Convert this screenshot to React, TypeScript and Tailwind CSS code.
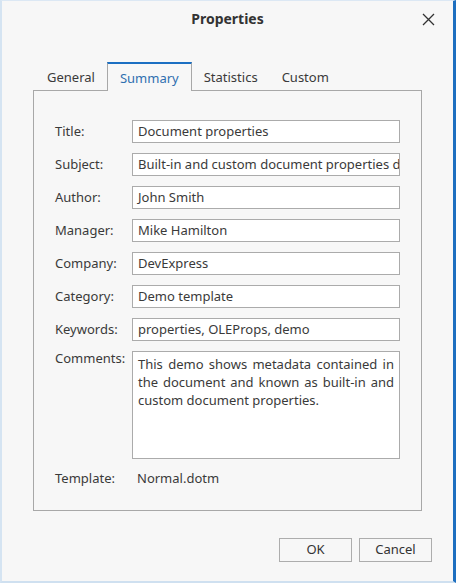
import React from 'react';

const fields: { label: string; value: string }[] = [
  { label: 'Title:', value: 'Document properties' },
  { label: 'Subject:', value: 'Built-in and custom document properties demo' },
  { label: 'Author:', value: 'John Smith' },
  { label: 'Manager:', value: 'Mike Hamilton' },
  { label: 'Company:', value: 'DevExpress' },
  { label: 'Category:', value: 'Demo template' },
  { label: 'Keywords:', value: 'properties, OLEProps, demo' },
];

const tabs = ['General', 'Summary', 'Statistics', 'Custom'];

export default function App() {
  return (
    <div
      className="w-[456px] h-[583px] bg-[#f7f7f7] border-l-2 border-t border-r-[3px] border-b-2 border-l-[#d5e4f2] border-t-[#dce8f4] border-r-[#1d6fc0] border-b-[#cfe0f0] flex flex-col text-[13px] text-[#3a3a3a]"
      style={{ fontFamily: '"Segoe UI", "Noto Sans", "Open Sans", sans-serif' }}
    >
      {/* title bar */}
      <div className="relative h-[35px] flex items-center justify-center">
        <span className="font-bold text-[14px] text-[#333]">Properties</span>
        <svg className="absolute right-[18px] top-[12px]" width="13" height="13" viewBox="0 0 13 13">
          <path d="M1 1 L12 12 M12 1 L1 12" stroke="#333" strokeWidth="1.3" fill="none" />
        </svg>
      </div>

      {/* tabs */}
      <div className="mt-[26px] px-[31px] flex flex-col">
        <div className="flex items-end h-[28px] relative z-10 pl-[2px]">
          {tabs.map((t) =>
            t === 'Summary' ? (
              <div
                key={t}
                className="h-[29px] -mb-px px-[12px] border-x border-[#a8a8a8] border-t-2 border-t-[#1b6fc2] bg-[#f7f7f7] text-[#2f6fb0] flex items-center pt-[2px]"
              >
                {t}
              </div>
            ) : (
              <div key={t} className="h-[28px] px-[12px] flex items-center pt-[4px] text-[#3a3a3a]">
                {t}
              </div>
            )
          )}
        </div>

        <div className="h-[421px] border border-[#a8a8a8] pt-[29px] pl-[21px] pr-[21px] flex flex-col">
          <div className="flex flex-col gap-[10px]">
            {fields.map((f) => (
              <div key={f.label} className="flex items-center">
                <div className="w-[77px] shrink-0">{f.label}</div>
                <div className="flex-1 h-[23px] bg-white border border-[#ababab] px-[5px] flex items-center overflow-hidden whitespace-nowrap">
                  {f.value}
                </div>
              </div>
            ))}
            <div className="flex items-start">
              <div className="w-[77px] shrink-0 -mt-[2px]">Comments:</div>
              <div className="flex-1 h-[108px] bg-white border border-[#ababab] pl-[5px] pr-[5px] pt-[3px] leading-[18px] text-justify">
                This demo shows metadata contained in the document and known as built-in and custom document properties.
              </div>
            </div>
          </div>
          <div className="flex items-center mt-[10px] h-[20px]">
            <div className="w-[82px] shrink-0">Template:</div>
            <div>Normal.dotm</div>
          </div>
        </div>
      </div>

      {/* buttons */}
      <div className="flex justify-end gap-[7px] pr-[21px] mt-[27px]">
        <button className="w-[73px] h-[24px] border border-[#adadad] bg-[#f7f7f7] text-[#333]">OK</button>
        <button className="w-[73px] h-[24px] border border-[#adadad] bg-[#f7f7f7] text-[#333]">Cancel</button>
      </div>
    </div>
  );
}
